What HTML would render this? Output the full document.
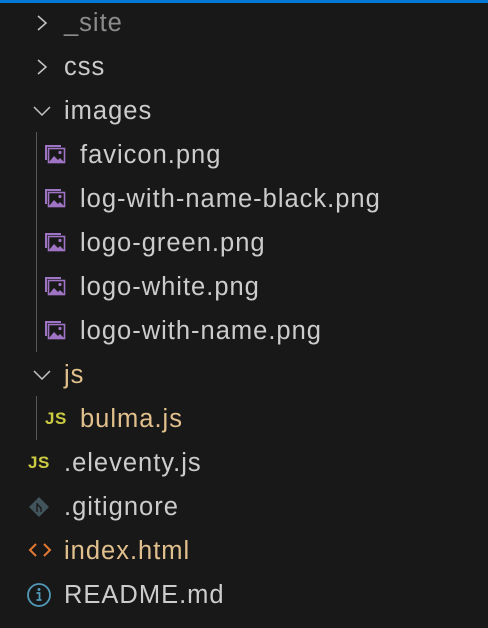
<!DOCTYPE html>
<html><head><style>
body{margin:0;width:488px;height:628px;background:#181818;font-family:"Liberation Sans",Helvetica,sans-serif;position:relative;overflow:hidden}
.bar{position:absolute;left:0;top:0;width:488px;height:3px;background:#0078d4}
.r{position:absolute;left:0;height:44px;line-height:44px;font-size:25.5px;letter-spacing:1px;color:#cccccc;white-space:nowrap}
.r span{position:absolute;top:0}
.js{font-size:17px!important;font-weight:bold;color:#cbcb41;letter-spacing:0.5px;top:0!important}
.ic{position:absolute}
.g{position:absolute;left:36px;width:1px;background:#585858}
</style></head><body>
<div class="bar"></div>
<div class="g" style="top:132px;height:220px"></div>
<div class="g" style="top:396px;height:44px"></div>

<svg class="ic" style="left:34px;top:14px" width="16" height="18"><path d="M4 2l8 7-8 7" fill="none" stroke="#c5c5c5" stroke-width="1.5"/></svg>
<div class="r" style="top:1px"><span style="left:64px;color:#8c8c8c">_site</span></div>
<svg class="ic" style="left:34px;top:58px" width="16" height="18"><path d="M4 2l8 7-8 7" fill="none" stroke="#c5c5c5" stroke-width="1.5"/></svg>
<div class="r" style="top:45px"><span style="left:64px">css</span></div>
<svg class="ic" style="left:32px;top:104px" width="20" height="14"><path d="M2 3l8 8 8-8" fill="none" stroke="#c5c5c5" stroke-width="1.5"/></svg>
<div class="r" style="top:89px"><span style="left:64px">images</span></div>

<svg width="0" height="0" style="position:absolute"><defs><g id="im"><path d="M1 1h16v2H3v13H1z" fill="#a074c4"/><rect x="4.5" y="4.5" width="16" height="14" fill="none" stroke="#a074c4" stroke-width="1.6"/><path d="M5 18l5-6 4 4 2-2 4 4z" fill="#a074c4"/><circle cx="16" cy="8.5" r="1.6" fill="#a074c4"/></g></defs></svg>
<svg class="ic" style="left:44px;top:144px" width="22" height="20"><use href="#im"/></svg>
<div class="r" style="top:133px"><span style="left:80px">favicon.png</span></div>
<svg class="ic" style="left:44px;top:188px" width="22" height="20"><use href="#im"/></svg>
<div class="r" style="top:177px"><span style="left:80px">log-with-name-black.png</span></div>
<svg class="ic" style="left:44px;top:232px" width="22" height="20"><use href="#im"/></svg>
<div class="r" style="top:221px"><span style="left:80px">logo-green.png</span></div>
<svg class="ic" style="left:44px;top:276px" width="22" height="20"><use href="#im"/></svg>
<div class="r" style="top:265px"><span style="left:80px">logo-white.png</span></div>
<svg class="ic" style="left:44px;top:320px" width="22" height="20"><use href="#im"/></svg>
<div class="r" style="top:309px"><span style="left:80px">logo-with-name.png</span></div>

<svg class="ic" style="left:32px;top:368px" width="20" height="14"><path d="M2 3l8 8 8-8" fill="none" stroke="#c5c5c5" stroke-width="1.5"/></svg>
<div class="r" style="top:353px"><span style="left:64px;color:#e2c08d">js</span></div>
<div class="r" style="top:397px"><span class="js" style="left:45px">JS</span><span style="left:80px;color:#e2c08d">bulma.js</span></div>
<div class="r" style="top:441px"><span class="js" style="left:28px">JS</span><span style="left:64px">.eleventy.js</span></div>

<svg class="ic" style="left:28px;top:496px" width="22" height="22"><path d="M11 1l10 10-10 10L1 11z" fill="#41535b"/><path d="M9 7v9M9 8l4 4v4" stroke="#181818" stroke-width="1.3" fill="none"/></svg>
<div class="r" style="top:485px"><span style="left:64px">.gitignore</span></div>
<svg class="ic" style="left:28px;top:542px" width="24" height="16"><path d="M8 2L2 8l6 6M16 2l6 6-6 6" fill="none" stroke="#e37933" stroke-width="2"/></svg>
<div class="r" style="top:529px"><span style="left:64px;color:#e2c08d">index.html</span></div>
<svg class="ic" style="left:26px;top:582px" width="26" height="26"><circle cx="13" cy="13" r="11" fill="none" stroke="#519aba" stroke-width="1.8"/><circle cx="13" cy="7.5" r="1.5" fill="#519aba"/><path d="M10.5 11h3v7M10.5 18h5" stroke="#519aba" stroke-width="1.8" fill="none"/></svg>
<div class="r" style="top:573px"><span style="left:64px">README.md</span></div>
</body></html>
